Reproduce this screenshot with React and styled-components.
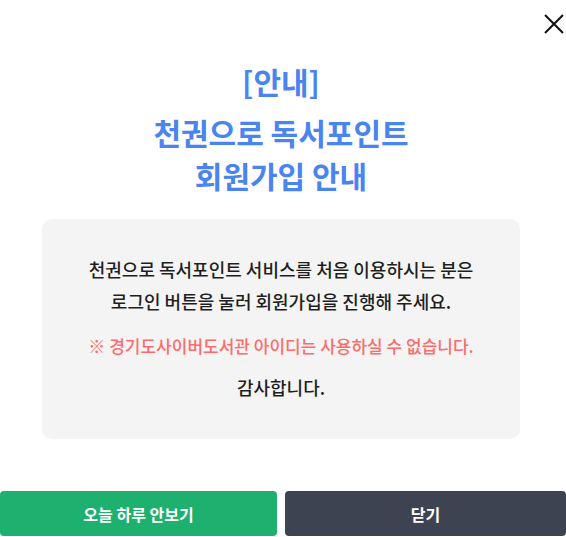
import React from "react";
import styled, { createGlobalStyle } from "styled-components";

const GlobalStyle = createGlobalStyle`
  html, body {
    margin: 0;
    padding: 0;
    background: #ffffff;
  }
  body {
    font-family: "Noto Sans CJK KR", "Noto Sans", sans-serif;
    -webkit-font-smoothing: antialiased;
  }
`;

const Popup = styled.div`
  position: relative;
  width: 566px;
  height: 537px;
  background: #fff;
  display: flex;
  flex-direction: column;
  overflow: hidden;
`;

const CloseButton = styled.button`
  position: absolute;
  top: 14px;
  right: 2px;
  width: 20px;
  height: 20px;
  padding: 0;
  border: 0;
  background: none;
  cursor: pointer;
  display: flex;
`;

const Content = styled.div`
  flex: 1;
  padding: 60px 46px 0 42px;
  display: flex;
  flex-direction: column;
  align-items: stretch;
`;

const Heading = styled.h1`
  margin: 0;
  text-align: center;
  color: #4a84ef;
  font-size: 30px;
  font-weight: 700;
  line-height: 43px;
  letter-spacing: 0;
`;

const Tag = styled.span`
  display: block;
  margin-bottom: 8px;
`;

const NoticeBox = styled.div`
  margin-top: 22px;
  height: 220px;
  box-sizing: border-box;
  background: #f4f4f4;
  border-radius: 10px;
  display: flex;
  flex-direction: column;
  align-items: center;
  justify-content: center;
  padding-bottom: 2px;
`;

const Paragraph = styled.p`
  margin: 0;
  text-align: center;
  font-size: ${(p) => p.$size || 18}px;
  line-height: 32px;
  color: ${(p) => (p.$warn ? "#ff6b6b" : "#1f1f1f")};
  font-weight: 500;
  letter-spacing: 0;
  margin-top: ${(p) => p.$gap || 0}px;
`;

const Actions = styled.div`
  display: grid;
  grid-template-columns: 277px 281px;
  column-gap: 8px;
  height: 45px;
  margin-bottom: 1px;
`;

const ActionButton = styled.button`
  border: 0;
  border-radius: 4px;
  background: ${(p) => p.$bg};
  color: #fff;
  font-family: inherit;
  font-size: 16px;
  font-weight: 700;
  letter-spacing: 0;
  cursor: pointer;
`;

export default function App() {
  return (
    <>
      <GlobalStyle />
      <Popup>
        <CloseButton aria-label="닫기">
          <svg width="20" height="20" viewBox="0 0 20 20">
            <path
              d="M1 1 L19 19 M19 1 L1 19"
              stroke="#111"
              strokeWidth="2"
              fill="none"
            />
          </svg>
        </CloseButton>
        <Content>
          <Heading>
            <Tag>[안내]</Tag>
            천권으로 독서포인트
            <br />
            회원가입 안내
          </Heading>
          <NoticeBox>
            <Paragraph>
              천권으로 독서포인트 서비스를 처음 이용하시는 분은
              <br />
              로그인 버튼을 눌러 회원가입을 진행해 주세요.
            </Paragraph>
            <Paragraph $warn $size={17} $gap={13}>
              ※ 경기도사이버도서관 아이디는 사용하실 수 없습니다.
            </Paragraph>
            <Paragraph $gap={9}>감사합니다.</Paragraph>
          </NoticeBox>
        </Content>
        <Actions>
          <ActionButton $bg="#1db06f">오늘 하루 안보기</ActionButton>
          <ActionButton $bg="#3e4351">닫기</ActionButton>
        </Actions>
      </Popup>
    </>
  );
}
